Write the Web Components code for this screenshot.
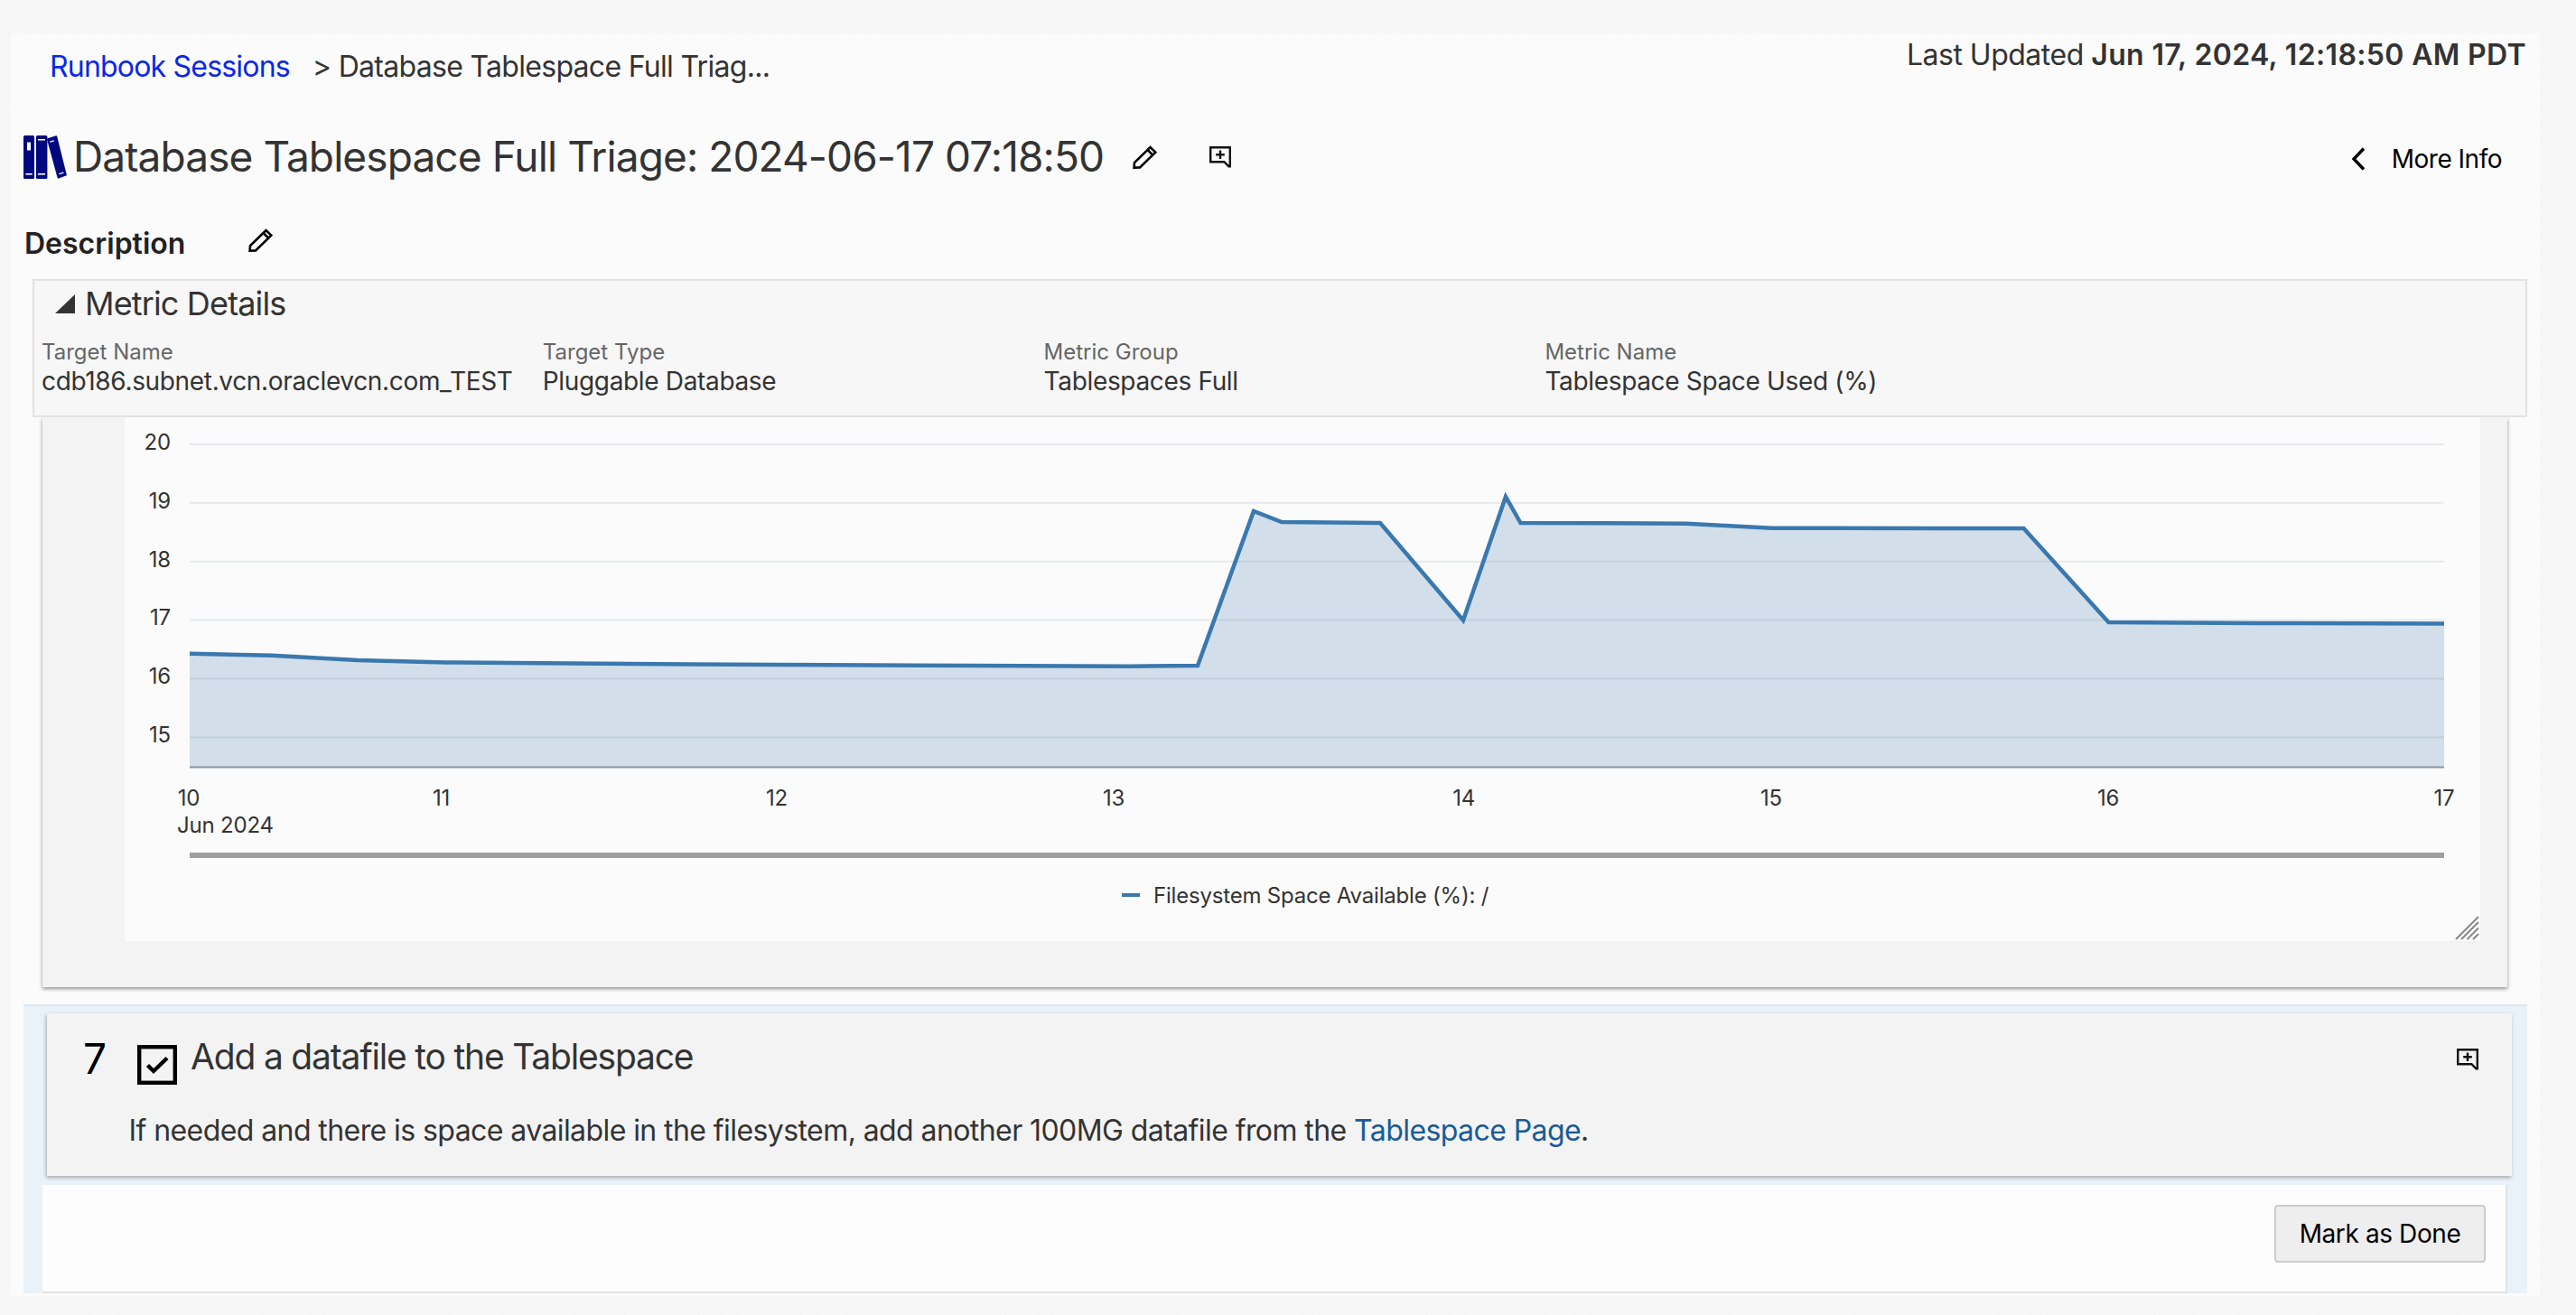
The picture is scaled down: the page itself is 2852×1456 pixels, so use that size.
<!DOCTYPE html>
<html lang="en">
<head>
<meta charset="utf-8">
<title>Runbook Session</title>
<style>
  html, body { margin: 0; padding: 0; }
  body {
    box-sizing: border-box;
    width: 2852px;
    height: 1456px;
    padding: 37px 0 0 12px;
    overflow: hidden;
    font-family: Inter, "Liberation Sans", sans-serif;
    color: #333;
    background: repeating-linear-gradient(135deg, #f4f4f4 0 1px, #f8f8f8 1px 3px);
  }
  rb-step a { color: #1a5a96; text-decoration: none; }
</style>
</head>
<body>

<template id="rb-page">
  <style>
    :host { display: block; box-sizing: border-box; width: 2800px; height: 1398px; padding-bottom: 3px; background: #fbfbfb; }
  </style>
  <slot></slot>
</template>

<template id="rb-topbar">
  <style>
    :host { display: flex; justify-content: space-between; align-items: flex-start; box-sizing: border-box; height: 93px; padding: 4px 15px 0 43px; font-size: 32px; line-height: 40px; }
    .crumbs { display: flex; margin-top: 13px; letter-spacing: -.7px; }
    .updated { letter-spacing: -.5px; }
    ::slotted(a) { color: #0a27e8; text-decoration: none; margin-right: 25px; letter-spacing: -.8px; }
  </style>
  <div class="crumbs"><slot name="crumbs"></slot></div>
  <div class="updated"><slot name="updated"></slot></div>
</template>

<template id="rb-title">
  <style>
    :host { display: flex; align-items: center; box-sizing: border-box; height: 86px; padding: 0 42px 0 14px; }
    h1 { margin: 0 32px 0 7px; font-size: 46px; line-height: 60px; font-weight: 400; letter-spacing: -.9px; color: #333; white-space: nowrap; }
    rb-icon { margin-top: 2px; }
    .more { display: flex; align-items: center; margin: 5px 0 0 auto; font-size: 28px; letter-spacing: -.5px; color: #000; gap: 29px; }
    .more rb-icon { margin-top: 0; }
    .comment { margin-left: 58px; }
  </style>
  <rb-icon name="books"></rb-icon>
  <h1><slot></slot></h1>
  <rb-icon name="pencil"></rb-icon>
  <rb-icon class="comment" name="comment"></rb-icon>
  <div class="more"><rb-icon name="chevron"></rb-icon><slot name="more"></slot></div>
</template>

<template id="rb-description">
  <style>
    :host { display: flex; align-items: flex-start; box-sizing: border-box; height: 93px; padding: 37px 0 0 15px; }
    .label { width: 248px; margin-top: -3px; font-size: 32px; line-height: 40px; font-weight: 600; color: #222; }
  </style>
  <div class="label"><slot></slot></div>
  <rb-icon name="pencil"></rb-icon>
</template>

<template id="rb-panel">
  <style>
    :host { display: block; position: relative; z-index: 1; box-sizing: border-box; width: 2762px; height: 153px; margin-left: 24px; padding: 0 0 0 8px; background: #f7f7f7; border: 2px solid #e2e2e2; }
    .head { display: flex; align-items: center; height: 50px; padding-left: 15px; gap: 11px; font-size: 36px; letter-spacing: -.85px; color: #333; }
    .fields { display: flex; margin-top: 14px; }
  </style>
  <div class="head">
    <svg width="22" height="21" viewBox="0 0 22 21"><polygon points="22,0 22,21 0,21" fill="#333"/></svg>
    <slot name="title"></slot>
  </div>
  <div class="fields"><slot></slot></div>
</template>

<template id="rb-field">
  <style>
    :host { display: block; width: 554.8px; }
    .label { font-size: 24px; line-height: 30px; color: #666; }
    .value { font-size: 28px; line-height: 34px; letter-spacing: -.34px; color: #333; white-space: nowrap; }
  </style>
  <div class="label"><slot name="label"></slot></div>
  <div class="value"><slot></slot></div>
</template>

<template id="rb-chart-card">
  <style>
    :host { display: block; box-sizing: border-box; width: 2729px; height: 631px; margin-left: 35px; padding: 0 30px 51px 91px; background: #f3f3f3; box-shadow: 0 2px 4px rgba(0,0,0,.42); }
    .plot { height: 580px; background: #fbfbfb; }
    svg { display: block; font-family: Inter, "Liberation Sans", sans-serif; font-size: 24px; letter-spacing: -.2px; fill: #333; }
  </style>
  <div class="plot"></div>
</template>

<template id="rb-step">
  <style>
    :host { display: block; box-sizing: border-box; width: 2772px; height: 320px; margin: 19px 0 0 14px; padding-top: 8px; background: #e9f1f9; border-top: 2px solid #e2e6ea; }
    .head { position: relative; display: flex; flex-direction: column; box-sizing: border-box; width: 2729px; height: 180px; margin-left: 26px; padding: 22px 37px 0 40px; background: #f3f3f3; box-shadow: -1px 2px 4px rgba(0,0,0,.3); }
    .row { display: flex; align-items: flex-start; }
    .num { width: 60px; font-size: 46px; line-height: 56px; color: #000; }
    .check { display: block; margin-top: 13px; }
    .title { margin-left: 15px; font-size: 39px; line-height: 52px; letter-spacing: -1.19px; color: #333; white-space: nowrap; }
    rb-icon { margin: 17px 0 0 auto; }
    .desc { margin: 31px 0 0 50.5px; font-size: 32px; line-height: 40px; letter-spacing: -.58px; color: #333; white-space: nowrap; }
    .body { display: flex; justify-content: flex-end; box-sizing: border-box; width: 2729px; height: 120px; margin: 10px 0 0 21px; padding: 22px 22px 0 0; background: #fdfdfd; border-right: 2px solid #e2e2e2; border-bottom: 2px solid #e2e2e2; }
  </style>
  <div class="head">
    <div class="row">
      <div class="num"><slot name="num"></slot></div>
      <svg class="check" width="44" height="44" viewBox="0 0 44 44">
        <rect x="2.200" y="2.200" width="39.600" height="39.600" fill="none" stroke="#000" stroke-width="4.400"/>
        <path d="M11.500 22.500l6.500 6.500 15-14.500" fill="none" stroke="#000" stroke-width="4.400"/>
      </svg>
      <div class="title"><slot name="title"></slot></div>
      <rb-icon name="comment"></rb-icon>
    </div>
    <div class="desc"><slot name="desc"></slot></div>
  </div>
  <div class="body"><slot></slot></div>
</template>

<template id="rb-button">
  <style>
    :host { display: inline-flex; align-items: center; justify-content: center; box-sizing: border-box; width: 234px; height: 64px; background: #eee; border: 2px solid #ccc; border-radius: 4px; font-size: 28px; letter-spacing: -.4px; color: #000; }
  </style>
  <slot></slot>
</template>

<rb-page>
  <rb-topbar>
    <a slot="crumbs">Runbook Sessions</a>
    <span slot="crumbs">&gt; Database Tablespace Full Triag...</span>
    <span slot="updated">Last Updated <b style="font-weight:600;letter-spacing:.35px">Jun 17, 2024, 12:18:50 AM PDT</b></span>
  </rb-topbar>
  <rb-title>Database Tablespace Full Triage: 2024-06-17 07:18:50<span slot="more">More Info</span></rb-title>
  <rb-description>Description</rb-description>
  <rb-panel>
    <span slot="title">Metric Details</span>
    <rb-field><span slot="label">Target Name</span>cdb186.subnet.vcn.oraclevcn.com_TEST</rb-field>
    <rb-field><span slot="label">Target Type</span>Pluggable Database</rb-field>
    <rb-field><span slot="label">Metric Group</span>Tablespaces Full</rb-field>
    <rb-field><span slot="label">Metric Name</span>Tablespace Space Used (%)</rb-field>
  </rb-panel>
  <rb-chart-card legend="Filesystem Space Available (%): /"></rb-chart-card>
  <rb-step>
    <span slot="num">7</span>
    <span slot="title">Add a datafile to the Tablespace</span>
    <span slot="desc">If needed and there is space available in the filesystem, add another 100MG datafile from the <a>Tablespace Page</a>.</span>
    <rb-button>Mark as Done</rb-button>
  </rb-step>
</rb-page>

<script>
  !function(){
    const icons = {
      books: `<svg width="48" height="48" viewBox="0 0 48 48">
        <rect width="12" height="48" rx="1.5" fill="#00087f"/>
        <rect x="14" width="12.4" height="48" rx="1.5" fill="#00087f"/>
        <path d="M26.7 3.2 36 .3q.9-.2 1.2.7l10.6 42.4q.2 1-.7 1.2l-8.2 3q-1 .2-1.3-.8L26 4.4q-.1-.9.7-1.2Z" fill="#00087f"/>
        <g fill="#fff">
          <rect x="4" y="7.5" width="4" height="9"/>
          <rect x="2.4" y="42" width="7.3" height="1.6"/>
          <rect x="16" y="4" width="8" height="1.5"/>
          <rect x="16" y="42" width="8" height="1.6"/>
          <path d="M29 6.5l4.5-1.3.4 1.3-4.5 1.3Z"/>
          <path d="M39.2 42l5-1.6.4 1.3-5 1.6Z"/>
        </g>
      </svg>`,
      pencil: `<svg width="27" height="26" viewBox="0 0 27 26" fill="none" stroke="#000" stroke-width="2.6">
        <path d="M1.6 24.6 2 19 19.5 2l5.8 5.6L8 24.4Z"/>
        <path d="M16.6 5l5.6 5.6"/>
      </svg>`,
      comment: `<svg width="24" height="24" viewBox="0 0 24 24" fill="none" stroke="#111" stroke-width="2.4">
        <path d="M1.2 1.2h21.6v21.2h-1.4l-5-5.2H1.2Z"/>
        <path d="M12 4.6v9.4M7.2 9.2h9.6"/>
      </svg>`,
      chevron: `<svg width="16" height="26" viewBox="0 0 16 26" fill="none" stroke="#000" stroke-width="3.4">
        <path d="M14 1.5 3 13l11 11.5"/>
      </svg>`
    };

    // plain shadow-root elements, markup comes from the template of the same name
    ['rb-page', 'rb-topbar', 'rb-title', 'rb-description', 'rb-panel', 'rb-field', 'rb-step', 'rb-button'].forEach((name) => {
      customElements.define(name, class extends HTMLElement {
        constructor() {
          super();
          const shadowRoot = this.attachShadow({ mode: 'open' });
          shadowRoot.appendChild(document.getElementById(name).content.cloneNode(true));
        }
      });
    });

    customElements.define('rb-icon', class extends HTMLElement {
      constructor() {
        super();
        this.attachShadow({ mode: 'open' });
      }
      connectedCallback() {
        this.shadowRoot.innerHTML = `<style>:host { display: block; line-height: 0; }</style>${icons[this.getAttribute('name')]}`;
      }
    });

    customElements.define('rb-chart-card', class extends HTMLElement {
      constructor() {
        super();
        const shadowRoot = this.attachShadow({ mode: 'open' });
        shadowRoot.appendChild(document.getElementById('rb-chart-card').content.cloneNode(true));
      }

      connectedCallback() {
        // page coordinates minus the plot's origin
        const ox = 138, oy = 462;
        const left = 210, right = 2706, base = 849.5;
        const points = [[210,723.7],[301,725.8],[396,731],[494,733.4],[631,734.6],[861,736],[1250,737.7],[1326,737],[1388,566],[1419,578],
          [1528,579],[1620,686.7],[1667,550],[1683.5,579],[1867,579.7],[1962,584.7],[2148,585],[2240.5,585],[2334.5,689],[2500,690],[2706,690.5]];
        const line = points.map((p) => `${p[0] - ox},${p[1] - oy}`).join(' ');
        const grid = [[20,492],[19,556.8],[18,621.8],[17,686.6],[16,751.6],[15,816.6]];
        const days = [[10,209],[11,488.5],[12,860],[13,1233],[14,1620.7],[15,1961],[16,2334],[17,2706]];
        this.shadowRoot.querySelector('.plot').innerHTML = `<svg width="2608" height="580" viewBox="0 0 2608 580">
          ${grid.map((g) => `<line x1="${left - ox}" x2="${right - ox}" y1="${g[1] - oy}" y2="${g[1] - oy}" stroke="#e6e9ec" stroke-width="2"/>
            <text x="${189 - ox}" y="${g[1] - oy + 5.7}" text-anchor="end">${g[0]}</text>`).join('')}
          <polygon points="${left - ox},${base - oy} ${line} ${right - ox},${base - oy}" fill="#3a78ad" fill-opacity=".21"/>
          <polyline points="${line}" fill="none" stroke="#3a78ad" stroke-width="4.5"/>
          <line x1="${left - ox}" x2="${right - ox}" y1="${base - oy}" y2="${base - oy}" stroke="#8a97a5" stroke-width="2"/>
          ${days.map((d) => `<text x="${d[1] - ox}" y="${891.5 - oy}" text-anchor="middle">${d[0]}</text>`).join('')}
          <text x="${196 - ox}" y="${922 - oy}">Jun 2024</text>
          <rect x="${left - ox}" y="${944 - oy}" width="${right - left}" height="6" fill="#9e9e9e"/>
          <rect x="${1242 - ox}" y="${989 - oy}" width="20" height="4" fill="#3a78ad"/>
          <text x="${1277 - ox}" y="${1000 - oy}">${this.getAttribute('legend')}</text>
          <path d="M2581 578l25-25M2587 578l19-19M2593.500 578l12.500-12.500M2600 578l6-6" stroke="#888" stroke-width="2"/>
        </svg>`;
      }
    });
  }();
</script>
</body>
</html>
